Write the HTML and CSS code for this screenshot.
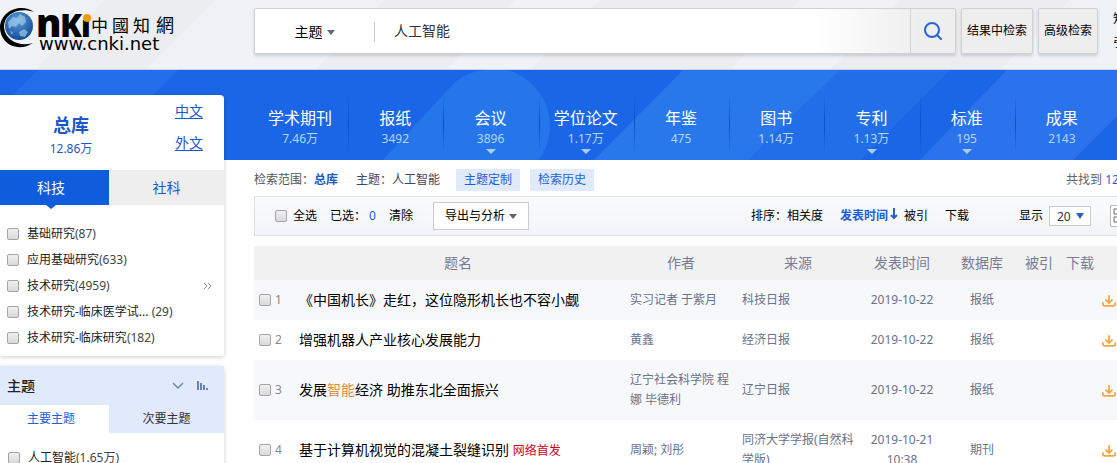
FILE: index.html
```html
<!DOCTYPE html>
<html lang="zh-CN">
<head>
    <meta charset="UTF-8">
    <meta name="viewport" content="width=device-width, initial-scale=1.0">
    <title>检索 - 中国知网</title>
    <link rel="stylesheet" href="styles.css">
</head>
<body>

<!-- Background shapes -->
<svg class="backdrop" viewBox="0 0 1117 160" preserveAspectRatio="xMinYMin slice" aria-hidden="true">
    <rect width="3000" height="70" fill="#eff3f7"/>
    <path d="M105 0h110l-70 70h-110zM385 0h130l-70 70h-130zM600 0h200l-70 70h-200zM900 0h170l-70 70h-170z" fill="#ecedf0"/>
    <rect y="70" width="3000" height="90" fill="#1b66e6"/>
    <path d="M38 70h140l-90 90h-140z" fill="#236eea"/>
    <path d="M383 160l72-78a58 58 0 0 1 30-12h22a58 58 0 0 1 32 90z" fill="#2576ea"/>
    <path d="M683 70h157l-92 90h-154z" fill="#2878eb"/>
    <path d="M840 70h110l-90 90h-112z" fill="#226ee8"/>
    <path d="M1007 70h156l-90 90h-153z" fill="#2b73ec"/>
    <path d="M0 69h3000v1h-3000z" fill="#c9d3e0"/>
</svg>

<header class="header">
    <a class="logo" href="#" aria-label="中国知网">
        <svg width="180" height="54" viewBox="0 0 180 54">
            <defs>
                <radialGradient id="globe" cx="45%" cy="30%" r="75%">
                    <stop offset="0" stop-color="#5b9bd8"/>
                    <stop offset="1" stop-color="#0c4795"/>
                </radialGradient>
            </defs>
            <path d="M34 12C22 3 1 10 0 27c0 17 18 26 33 16-13 4-28-2-29-16C4 13 20 7 34 12z" fill="#000"/>
            <circle cx="19" cy="26" r="14" fill="url(#globe)"/>
            <path d="M8 22l5-5 4 1 3-4 5 3 1 5-4 4-3-3-3 4-4-1-3 3zM19 32l5-3 4 3-3 5-5-1zM10 31l3 1-1 3z" fill="#b4d7ef" opacity=".6"/>
            <g class="logo-mark">
                <text x="36" y="37" font-size="38">n</text>
                <text x="60" y="37" font-size="32">K</text>
                <text x="81" y="37" font-size="30">ı</text>
            </g>
            <circle cx="87" cy="18" r="4" fill="#f59b00"/>
            <g class="logo-name">
                <text x="91" y="32" font-size="17">中</text>
                <text x="112" y="32" font-size="17">國</text>
                <text x="133" y="32" font-size="17">知</text>
                <text x="156" y="32" font-size="18">網</text>
            </g>
            <text class="logo-url" x="39" y="50">www.cnki.net</text>
        </svg>
    </a>
    <form class="search" onsubmit="return false">
        <div class="search-box">
            <button type="button" class="field-btn">主题<span class="caret"></span></button>
            <input type="text" value="人工智能" aria-label="检索词">
            <button type="submit" class="search-btn" aria-label="检索">
                <svg width="20" height="20" viewBox="0 0 20 20" fill="none" stroke="#2a64d9" stroke-width="2">
                    <circle cx="9" cy="9" r="7"/>
                    <path d="M14 14l4 4" stroke-linecap="round"/>
                </svg>
            </button>
        </div>
        <button type="button" class="side-btn">结果中检索</button>
        <button type="button" class="side-btn narrow">高级检索</button>
    </form>
    <div class="header-links">
        <a href="#">知识元检索</a>
        <a href="#">引文检索</a>
    </div>
</header>

<div class="layout">
    <aside class="sidebar">
        <section class="panel">
            <div class="total">
                <div class="total-count">
                    <strong>总库</strong>
                    <span>12.86万</span>
                </div>
                <div class="langs">
                    <a href="#">中文</a>
                    <a href="#">外文</a>
                </div>
            </div>
            <div class="tabs main-tabs">
                <button type="button" class="active">科技</button>
                <button type="button">社科</button>
            </div>
            <div class="group-body">
                <ul class="checks">
                    <li><label><input type="checkbox">基础研究<span>(87)</span></label></li>
                    <li><label><input type="checkbox">应用基础研究<span>(633)</span></label></li>
                    <li><label><input type="checkbox">技术研究<span>(4959)</span></label></li>
                    <li><label><input type="checkbox">技术研究-临床医学试...<span> (29)</span></label></li>
                    <li><label><input type="checkbox">技术研究-临床研究<span>(182)</span></label></li>
                </ul>
                <a class="more" href="#" aria-label="更多">
                    <svg width="9" height="8" viewBox="0 0 9 8" fill="none" stroke="#999"><path d="M1 1l3 3-3 3M5 1l3 3-3 3"/></svg>
                </a>
            </div>
        </section>

        <section class="panel">
            <div class="panel-title">
                <h2>主题</h2>
                <svg width="12" height="8" viewBox="0 0 12 8" fill="none" stroke="#6a82b4" stroke-width="1.5"><path d="M1 1l5 5 5-5"/></svg>
                <svg width="12" height="10" viewBox="0 0 12 10" fill="#6a82b4"><path d="M0 0h2v9H0zM3 2h2v7H3zM6 4h2v5H6zM9 7h2v2H9z"/></svg>
            </div>
            <div class="tabs sub-tabs">
                <button type="button" class="active">主要主题</button>
                <button type="button">次要主题</button>
            </div>
            <ul class="checks topic-checks">
                <li><label><input type="checkbox">人工智能<span>(1.65万)</span></label></li>
            </ul>
        </section>
    </aside>

    <main class="main">
        <nav class="dbs">
            <a href="#">学术期刊<span>7.46万</span></a>
            <a href="#">报纸<span>3492</span></a>
            <a href="#" class="has-sub">会议<span>3896</span></a>
            <a href="#" class="has-sub">学位论文<span>1.17万</span></a>
            <a href="#">年鉴<span>475</span></a>
            <a href="#">图书<span>1.14万</span></a>
            <a href="#" class="has-sub">专利<span>1.13万</span></a>
            <a href="#" class="has-sub">标准<span>195</span></a>
            <a href="#">成果<span>2143</span></a>
        </nav>

        <div class="scope">
            <span class="scope-label">检索范围：<a href="#">总库</a></span>
            <span class="scope-term">主题：人工智能</span>
            <a class="tag" href="#">主题定制</a>
            <a class="tag" href="#">检索历史</a>
            <div class="found">共找到 <em>12</em></div>
        </div>

        <div class="toolbar">
            <label class="all"><input type="checkbox">全选</label>
            <span class="picked">已选：<em>0</em></span>
            <a href="#">清除</a>
            <button type="button" class="export-btn">导出与分析<span class="caret"></span></button>
            <div class="sort">
                <span>排序：<a href="#">相关度</a></span>
                <a href="#" class="current">发表时间<svg width="8" height="12" viewBox="0 0 8 12" fill="none" stroke="#2a5fc4" stroke-width="2"><path d="M4 0v10M1 7l3 3 3-3"/></svg></a>
                <a href="#">被引</a>
                <a href="#">下载</a>
            </div>
            <div class="page-size">
                <label for="pageSize">显示</label>
                <select id="pageSize"><option>20</option></select>
            </div>
            <button type="button" class="view-btn" aria-label="切换视图">
                <svg width="16" height="16" viewBox="0 0 16 16" fill="none" stroke="#666"><path d="M1 1h5v5H1zM9 1h5v5H9zM1 9h5v5H1zM9 9h5v5H9z"/></svg>
            </button>
        </div>

        <table class="results">
            <thead>
                <tr>
                    <th class="col-no"></th>
                    <th>题名</th>
                    <th class="col-author">作者</th>
                    <th class="col-source">来源</th>
                    <th class="col-date">发表时间</th>
                    <th class="col-db">数据库</th>
                    <th class="col-cited">被引</th>
                    <th class="col-count">下载</th>
                    <th class="col-dl"></th>
                </tr>
            </thead>
            <tbody>
                <tr>
                    <td class="no"><label><input type="checkbox">1</label></td>
                    <td class="title"><a href="#">《中国机长》走红，这位隐形机长也不容小觑</a></td>
                    <td class="author">实习记者 于紫月</td>
                    <td class="source">科技日报</td>
                    <td>2019-10-22</td>
                    <td>报纸</td>
                    <td></td>
                    <td></td>
                    <td class="dl"><a href="#" aria-label="下载"><svg class="dl-icon" viewBox="0 0 16 14"><path d="M8 1v8M4 6l4 4 4-4M1 9v2q0 2 2 2h10q2 0 2-2V9"/></svg></a></td>
                </tr>
                <tr>
                    <td class="no"><label><input type="checkbox">2</label></td>
                    <td class="title"><a href="#">增强机器人产业核心发展能力</a></td>
                    <td class="author">黄鑫</td>
                    <td class="source">经济日报</td>
                    <td>2019-10-22</td>
                    <td>报纸</td>
                    <td></td>
                    <td></td>
                    <td class="dl"><a href="#" aria-label="下载"><svg class="dl-icon" viewBox="0 0 16 14"><path d="M8 1v8M4 6l4 4 4-4M1 9v2q0 2 2 2h10q2 0 2-2V9"/></svg></a></td>
                </tr>
                <tr>
                    <td class="no"><label><input type="checkbox">3</label></td>
                    <td class="title"><a href="#">发展<mark>智能</mark>经济 助推东北全面振兴</a></td>
                    <td class="author">辽宁社会科学院 程娜 毕德利</td>
                    <td class="source">辽宁日报</td>
                    <td>2019-10-22</td>
                    <td>报纸</td>
                    <td></td>
                    <td></td>
                    <td class="dl"><a href="#" aria-label="下载"><svg class="dl-icon" viewBox="0 0 16 14"><path d="M8 1v8M4 6l4 4 4-4M1 9v2q0 2 2 2h10q2 0 2-2V9"/></svg></a></td>
                </tr>
                <tr>
                    <td class="no"><label><input type="checkbox">4</label></td>
                    <td class="title"><a href="#">基于计算机视觉的混凝土裂缝识别</a> <b>网络首发</b></td>
                    <td class="author">周颖; 刘彤</td>
                    <td class="source">同济大学学报(自然科学版)</td>
                    <td>2019-10-21 10:38</td>
                    <td>期刊</td>
                    <td></td>
                    <td></td>
                    <td class="dl"><a href="#" aria-label="下载"><svg class="dl-icon" viewBox="0 0 16 14"><path d="M8 1v8M4 6l4 4 4-4M1 9v2q0 2 2 2h10q2 0 2-2V9"/></svg></a></td>
                </tr>
            </tbody>
        </table>
    </main>
</div>

</body>
</html>
```
FILE: styles.css
```css
* {
    box-sizing: border-box;
}

body {
    position: relative;
    margin: 0;
    height: 100vh;
    overflow: hidden;
    background-color: #fff;
    font-family: "Noto Sans", "Noto Sans CJK SC", sans-serif;
    font-size: 12px;
    line-height: 20px;
    color: #000;
}

a {
    color: inherit;
    text-decoration: none;
}

em {
    font-style: normal;
    color: #1b5fd9;
}

button,
input,
select {
    font: inherit;
    color: inherit;
}

button {
    padding: 0;
    border: none;
    background: none;
    cursor: pointer;
}

ul {
    margin: 0;
    padding: 0;
    list-style: none;
}

input[type="checkbox"] {
    appearance: none;
    flex: none;
    width: 12px;
    height: 12px;
    margin: 0;
    border: 1px solid #a5a5a5;
    border-radius: 2px;
    background: linear-gradient(#f0f0f0, #d9d9d9);
}

.caret {
    border: 4px solid transparent;
    border-top: 5px solid #666;
    border-bottom: 0;
}

.backdrop {
    position: absolute;
    top: 0;
    left: 0;
    z-index: -1;
    width: 100%;
    height: 160px;
}

/* Header */
.header {
    display: flex;
    height: 70px;
}

.logo {
    flex: none;
    width: 254px;
}

.logo-mark {
    font-family: "Open Sans", sans-serif;
    font-weight: 800;
}

.logo-url {
    font-family: "DejaVu Sans", sans-serif;
    font-size: 18px;
}

.search {
    display: flex;
    flex: 1;
    gap: 5px;
    padding: 8px 0 16px;
}

.search-box {
    display: flex;
    flex: 1;
    border: 1px solid #cfd1d4;
    border-radius: 2px;
    background: linear-gradient(to right, #fff 80%, #eee 95%);
    box-shadow: 0 2px 3px rgba(0, 0, 0, 0.15);
}

.field-btn {
    display: flex;
    align-items: center;
    justify-content: center;
    gap: 4px;
    width: 120px;
    height: 20px;
    margin: 13px 0;
    border-right: 1px solid #c8c8c8;
    font-size: 14px;
}

.search-box input {
    flex: 1;
    min-width: 0;
    padding: 0 19px;
    border: none;
    outline: none;
    background: none;
    font-size: 14px;
    color: #333;
}

.search-btn {
    display: flex;
    align-items: center;
    justify-content: center;
    width: 45px;
    border-left: 1px solid #cfd1d4;
}

.side-btn {
    width: 72px;
    border: 1px solid #cfd1d4;
    border-radius: 2px;
    background-color: #eee;
    box-shadow: 0 2px 3px rgba(0, 0, 0, 0.15);
}

.side-btn.narrow {
    width: 60px;
}

.header-links {
    display: flex;
    flex-direction: column;
    gap: 4px;
    width: 19px;
    padding: 9px 0 0 15px;
    white-space: nowrap;
    overflow: hidden;
}

/* Sidebar */
.layout {
    display: grid;
    grid-template-columns: 224px minmax(0, 1fr);
    column-gap: 30px;
}

.sidebar {
    display: flex;
    flex-direction: column;
    gap: 10px;
    padding-top: 25px;
}

.panel {
    border-radius: 0 4px 0 0;
    background-color: #fff;
    box-shadow: 0 1px 4px rgba(0, 0, 0, 0.2);
}

.total {
    display: flex;
    justify-content: space-between;
    height: 75px;
    padding-right: 21px;
}

.total-count {
    display: flex;
    flex-direction: column;
    gap: 4px;
    width: 142px;
    padding-top: 20px;
    text-align: center;
    color: #1d57c9;
}

.total-count strong {
    font-size: 18px;
}

.langs {
    display: flex;
    flex-direction: column;
    gap: 12px;
    padding-top: 6px;
    font-size: 14px;
    color: #1d57c9;
}

.langs a {
    text-decoration: underline;
    text-underline-offset: 2px;
}

.tabs {
    display: grid;
    grid-template-columns: 109px 1fr;
}

.tabs .active {
    padding-right: 7px;
}

.main-tabs {
    height: 35px;
    background-color: #eee;
    font-size: 14px;
    color: #1d57c9;
}

.main-tabs .active {
    position: relative;
    background-color: #0f5ddd;
    color: #fff;
}

.main-tabs .active::after {
    content: "";
    position: absolute;
    top: 100%;
    left: 46px;
    border: 5px solid transparent;
    border-top: 4px solid #0f5ddd;
    border-bottom: 0;
}

.group-body {
    display: flex;
    align-items: center;
    justify-content: space-between;
    padding: 16px 12px 5px 7px;
}

.checks label {
    display: flex;
    align-items: center;
    height: 26px;
    color: #222;
}

.checks input {
    margin-right: 8px;
}

.checks span {
    white-space: pre;
    color: #444;
}

.panel-title {
    display: flex;
    align-items: center;
    gap: 13px;
    height: 39px;
    padding: 0 15px 0 7px;
    background-color: #e1eafb;
}

.panel-title h2 {
    flex: 1;
    margin: 0;
    font-size: 14px;
    font-weight: 500;
    color: #222;
}

.sub-tabs {
    height: 28px;
    background-color: #e1eafb;
    color: #333;
}

.sub-tabs .active {
    background-color: #fff;
    color: #1b5fd9;
}

.topic-checks {
    padding: 12px 8px;
}

/* Database navigation */
.dbs {
    display: flex;
    height: 90px;
    padding-right: 6px;
    color: #fff;
}

.dbs a {
    position: relative;
    flex: 1;
    padding: 38px 3px 0 0;
    text-align: center;
    font-size: 16px;
    background: linear-gradient(transparent, #0d4fc4 50%, transparent) right 24px / 1px 60px no-repeat;
}

.dbs a:last-child {
    background: none;
}

.dbs span {
    display: block;
    margin-top: 1px;
    color: #b5d5fb;
    font-size: 12px;
}

.dbs .has-sub::after {
    content: "";
    position: absolute;
    bottom: 6px;
    left: calc(50% - 6px);
    border: 5px solid transparent;
    border-top: 5px solid #a9d0fb;
    border-bottom: 0;
}

/* Results */
.scope {
    display: flex;
    align-items: center;
    height: 36px;
    padding-top: 3px;
}

.scope-label {
    color: #555;
}

.scope-label a {
    font-weight: bold;
    color: #1d57c9;
}

.scope-term {
    margin: 0 16px 0 18px;
    color: #3d4664;
}

.tag {
    margin-right: 10px;
    padding: 1px 8px;
    background-color: #e1eafb;
    color: #1b5fd9;
}

.found {
    width: 51px;
    margin-left: auto;
    white-space: nowrap;
    overflow: hidden;
    color: #666;
}

.toolbar {
    display: flex;
    align-items: center;
    height: 40px;
    padding-left: 20px;
    border: 1px solid #dfe2e8;
    border-right: none;
    background: linear-gradient(#fafbfd, #f2f4f7);
    white-space: nowrap;
}

.all {
    display: flex;
    align-items: center;
    gap: 6px;
}

.picked {
    margin: 0 13px;
}

.picked em {
    margin-left: 3px;
}

.export-btn {
    display: flex;
    align-items: center;
    justify-content: center;
    gap: 4px;
    width: 96px;
    height: 28px;
    margin-left: 20px;
    border: 1px solid #ccc;
    background-color: #fff;
}

.sort {
    display: flex;
    gap: 17px;
    margin-left: auto;
}

.sort .current {
    margin-right: -11px;
    font-weight: bold;
    color: #1b5fd9;
}

.sort svg {
    margin-left: 2px;
}

.page-size {
    position: relative;
    display: flex;
    align-items: center;
    gap: 6px;
    margin: 0 19px 0 50px;
}

.page-size select {
    appearance: none;
    width: 42px;
    height: 20px;
    padding: 0 7px;
    border: 1px solid #ccc;
    border-radius: 0;
    background-color: #fff;
    color: #333;
}

.page-size::after {
    content: "";
    position: absolute;
    right: 7px;
    border: 4px solid transparent;
    border-top: 6px solid #2a5fc4;
    border-bottom: 0;
    pointer-events: none;
}

.view-btn {
    width: 7px;
    height: 22px;
    border: 1px solid #bbb;
    border-right: none;
    border-radius: 2px 0 0 2px;
    background-color: #fff;
    overflow: hidden;
}

.view-btn svg {
    display: block;
    margin-left: 2px;
}

.results {
    width: 100%;
    margin-top: 10px;
    border-collapse: collapse;
    table-layout: fixed;
    text-align: center;
    color: #6b7189;
}

.results th {
    height: 34px;
    padding: 0;
    background-color: #f1f1f1;
    font-size: 14px;
    font-weight: normal;
    color: #777c96;
}

.results td {
    padding: 10px;
}

.results tbody tr:nth-child(odd) {
    background-color: #f6f8fa;
}

.col-no { width: 38px; }
.col-author { width: 114px; }
.col-source { width: 120px; }
.col-date { width: 88px; }
.col-db { width: 72px; }
.col-cited { width: 42px; }
.col-count { width: 40px; }
.col-dl { width: 17px; }

.results .no {
    padding: 10px 0 10px 5px;
}

.no label {
    display: flex;
    align-items: center;
    gap: 4px;
    color: #888;
}

.results .title {
    padding: 10px 7px;
    text-align: left;
    font-size: 14px;
    color: #000;
}

.title mark {
    background: none;
    color: #e38a3c;
}

.title b {
    font-size: 12px;
    font-weight: normal;
    color: #d0021b;
}

.results .author {
    padding: 10px 6px;
    text-align: left;
}

.results .source {
    padding: 10px 0 10px 4px;
    text-align: left;
}

.results .dl {
    padding: 10px 0 10px 2px;
}

.dl-icon {
    display: block;
    width: 14px;
    height: 13px;
    fill: none;
    stroke: #f5a53a;
    stroke-width: 2;
}
```
